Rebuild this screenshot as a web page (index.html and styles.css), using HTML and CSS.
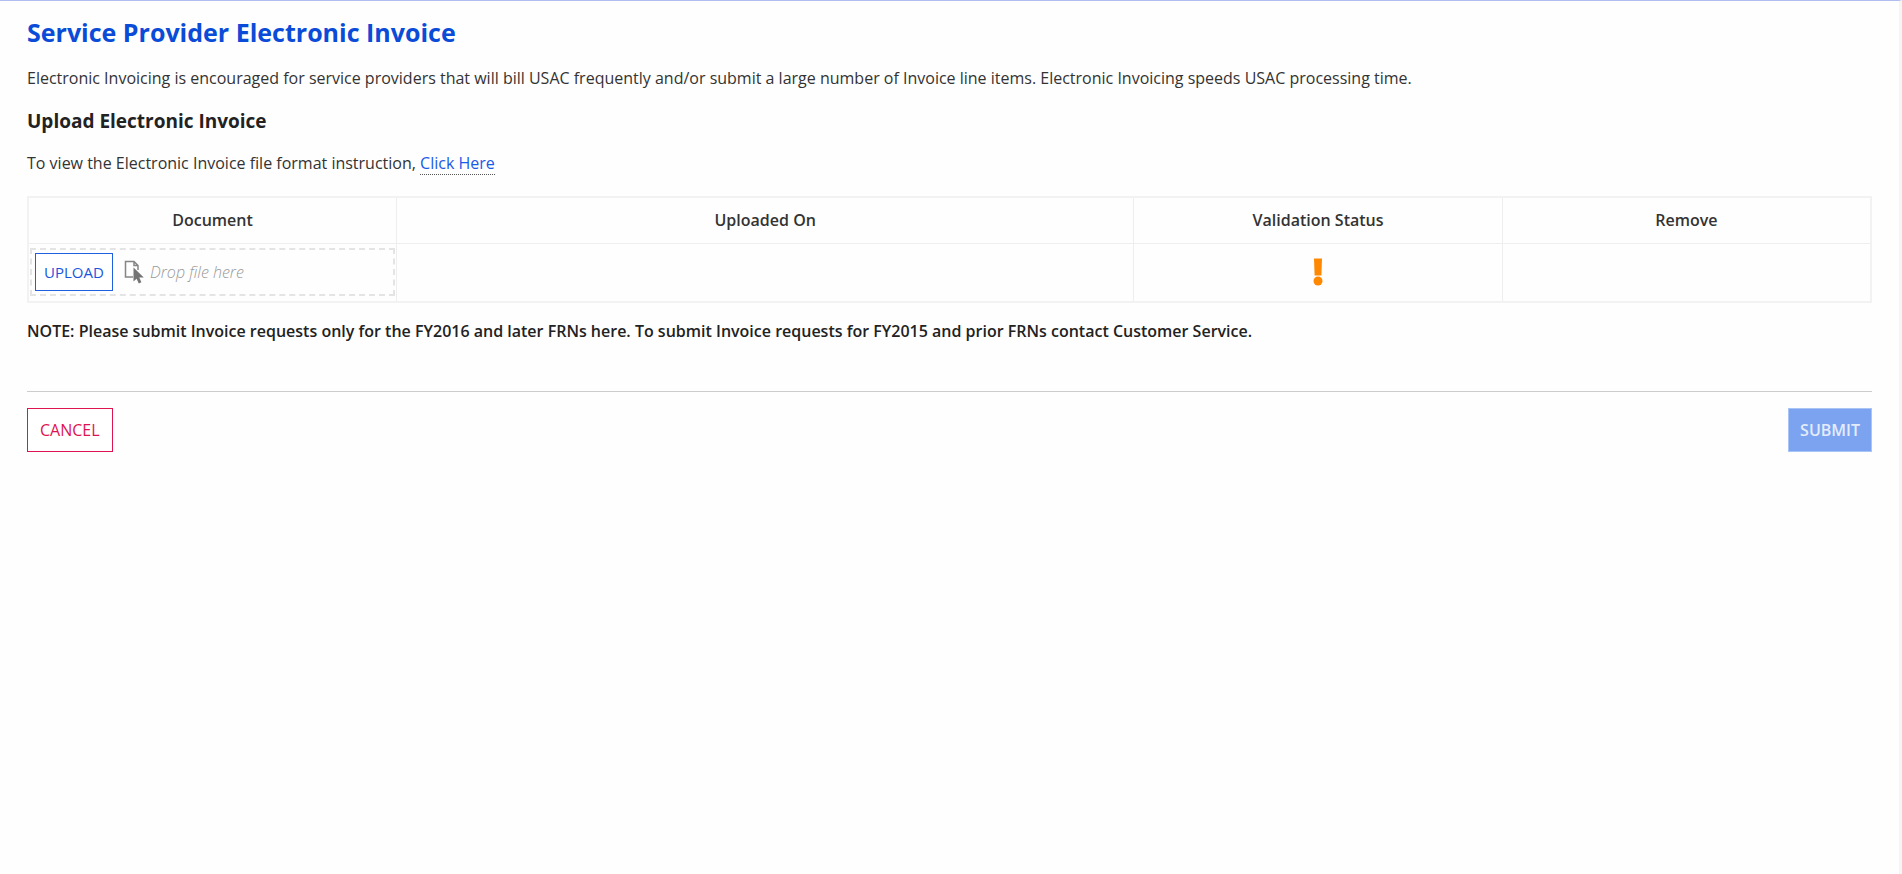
FILE: index.html
```
<!DOCTYPE html>
<html lang="en">
<head>
<meta charset="UTF-8">
<meta name="viewport" content="width=device-width, initial-scale=1.0">
<title>Service Provider Electronic Invoice</title>
<link rel="stylesheet" href="styles.css">
</head>
<body>

<main class="page">
    <h1>Service Provider Electronic Invoice</h1>
    <p>Electronic Invoicing is encouraged for service providers that will bill USAC frequently and/or submit a large number of Invoice line items. Electronic Invoicing speeds USAC processing time.</p>

    <h2>Upload Electronic Invoice</h2>
    <p>To view the Electronic Invoice file format instruction, <a href="#">Click Here</a></p>

    <form id="invoiceForm">
        <table class="documents">
            <thead>
                <tr>
                    <th>Document</th>
                    <th class="wide">Uploaded On</th>
                    <th>Validation Status</th>
                    <th>Remove</th>
                </tr>
            </thead>
            <tbody>
                <tr>
                    <td>
                        <div class="dropzone">
                            <button type="button" class="btn btn-upload">UPLOAD</button>
                            <svg class="file-icon" width="20" height="24" viewBox="0 0 20 24" aria-hidden="true">
                                <path d="M9 17H1.5V1.5H10L14 5.5V10M10 1.5V5.5H14" fill="none" stroke="#858585" stroke-width="1.5"/>
                                <path d="M9.5 7.5V21.5L12.6 18.8L14.8 23.5L17.4 22.3L15.3 17.6H19.8Z" fill="#757575"/>
                            </svg>
                            <span class="hint">Drop file here</span>
                        </div>
                    </td>
                    <td></td>
                    <td class="status">
                        <svg width="10" height="28" viewBox="0 0 10 28" role="img" aria-label="Not validated">
                            <path d="M1 0.5H9L8.4 17.5H1.6Z" fill="#ff8800"/>
                            <circle cx="5" cy="23" r="4.5" fill="#ff8800"/>
                        </svg>
                    </td>
                    <td></td>
                </tr>
            </tbody>
        </table>

        <p class="note">NOTE: Please submit Invoice requests only for the FY2016 and later FRNs here. To submit Invoice requests for FY2015 and prior FRNs contact Customer Service.</p>

        <div class="actions">
            <button type="button" class="btn btn-cancel">CANCEL</button>
            <button type="submit" class="btn btn-submit" disabled>SUBMIT</button>
        </div>
    </form>
</main>

</body>
</html>
```
FILE: styles.css
```
* {
    box-sizing: border-box;
}

body {
    margin: 0;
    background-color: #fefefe;
    color: #333;
    font-family: "Open Sans", "Noto Sans", sans-serif;
    font-size: 16px;
    line-height: 24px;
}

.page {
    min-height: 100vh;
    padding: 15px 27px 24px;
    border-top: 1px solid #b1bdef;
    border-right: 3px solid #f5f5f5;
}

h1 {
    margin: 0 0 18px;
    color: #0a4bd8;
    font-size: 25px;
    font-weight: 700;
    line-height: 32px;
}

h2 {
    margin: 0 0 16px;
    color: #222;
    font-size: 19px;
    font-weight: 700;
    line-height: 28px;
}

p {
    margin: 0 0 17px;
}

a {
    color: #1a5ae6;
    text-decoration: none;
    border-bottom: 1px dotted #555;
}

.documents {
    width: 100%;
    margin: 21px 0 16px;
    border: 2px solid #f2f2f2;
    border-collapse: collapse;
    table-layout: fixed;
}

.documents th,
.documents td {
    border: 1px solid #eee;
}

.documents th {
    width: 20%;
    height: 46px;
    padding: 0;
    font-weight: 600;
    text-align: center;
}

.documents .wide {
    width: 40%;
}

.documents td {
    height: 59px;
    padding: 0 1px;
}

.documents .status {
    text-align: center;
}

.status svg {
    display: block;
    margin: 0 auto;
}

.dropzone {
    display: flex;
    align-items: center;
    height: 48px;
    padding: 0 3px;
    border: 2px dashed #e4e4e4;
}

.file-icon {
    margin: 0 6px 0 11px;
}

.hint {
    color: #999;
    font-style: italic;
    font-weight: 300;
}

.btn {
    border: 1px solid;
    background-color: #fff;
    font-family: inherit;
    font-size: 16px;
}

.btn-upload {
    width: 78px;
    height: 38px;
    padding: 0;
    border-color: #1f60e0;
    color: #1a56dd;
    font-size: 15px;
}

.note {
    margin-bottom: 48px;
    color: #222;
    font-weight: 600;
}

.actions {
    display: flex;
    justify-content: space-between;
    padding-top: 16px;
    border-top: 1px solid #ccc;
}

.btn-cancel,
.btn-submit {
    height: 44px;
    padding: 0 12px;
}

.btn-cancel {
    border-color: #de1450;
    color: #de1450;
}

.btn-submit {
    padding: 0 11px;
    border-color: #a9c4f7;
    background-color: #7ba3f0;
    color: #e4ecfb;
    font-weight: 600;
}
```
